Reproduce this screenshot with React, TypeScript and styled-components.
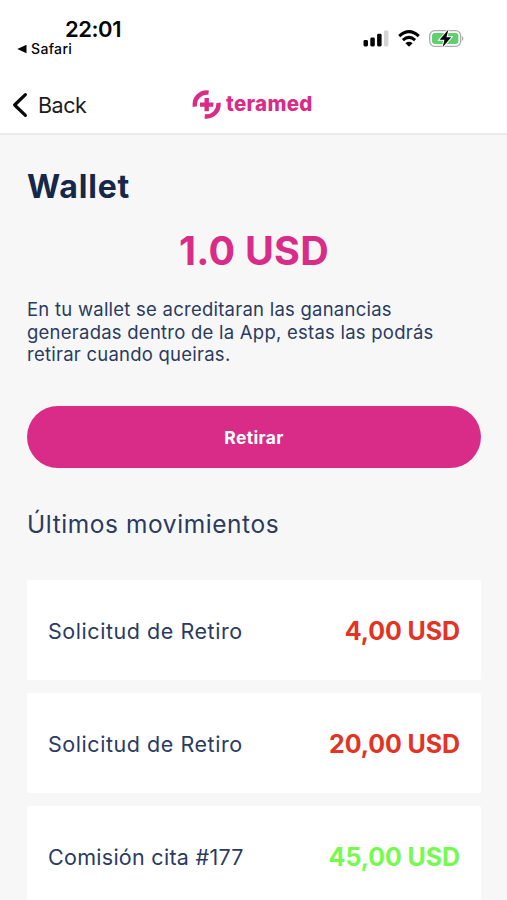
import React from 'react';
import styled, { createGlobalStyle } from 'styled-components';

const PINK = '#d92c88';
const NAVY = '#2b3b60';

const GlobalStyle = createGlobalStyle`
  *, *::before, *::after { box-sizing: border-box; }
  html, body { margin: 0; padding: 0; }
  body { background: #f7f7f7; overflow: hidden; }
`;

const Screen = styled.div`
  height: 900px;
  overflow: hidden;
  background: #f7f7f7;
  color: ${NAVY};
  font-family: Inter, 'Liberation Sans', sans-serif;
`;

const StatusBar = styled.div`
  height: 76px;
  padding: 17px 42px 0 17px;
  display: flex;
  justify-content: space-between;
  background: #fff;
  color: #050505;
`;

const Clock = styled.div`
  padding-left: 48px;
  font-size: 22px;
  line-height: 24px;
  font-weight: 600;
  letter-spacing: -0.45px;
`;

const ReturnLink = styled.div`
  display: flex;
  align-items: center;
  gap: 4px;
  font-size: 14px;
  line-height: 15px;
  letter-spacing: 0.35px;
  font-weight: 500;
`;

const Indicators = styled.div`
  padding-top: 11px;
  height: 34px;
  display: flex;
  align-items: flex-start;
`;

const Header = styled.header`
  height: 59px;
  padding: 0 12px;
  display: grid;
  grid-template-columns: 180px auto 1fr;
  align-items: start;
  border-bottom: 2px solid #ebebeb;
  background: #fff;
`;

const BackButton = styled.button`
  height: 58px;
  padding: 0;
  display: flex;
  align-items: center;
  gap: 10px;
  border: 0;
  background: none;
  color: #1c1c1e;
  font: 400 21.5px/24px Inter, sans-serif;
  letter-spacing: -0.5px;
`;

const Brand = styled.div`
  height: 56px;
  display: flex;
  align-items: center;
  gap: 5px;
  color: ${PINK};
`;

const BrandName = styled.span`
  font-size: 20.5px;
  line-height: 24px;
  font-weight: 800;
  letter-spacing: 0.3px;
`;

const Content = styled.main`
  padding: 33px 26px 0 27px;
`;

const Title = styled.h1`
  margin: 0;
  font-size: 32px;
  line-height: 38px;
  font-weight: 700;
  letter-spacing: 0.85px;
  color: #152849;
`;

const Balance = styled.div`
  margin-top: 21px;
  font-size: 39.5px;
  line-height: 48px;
  font-weight: 700;
  letter-spacing: 0.2px;
  text-align: center;
  color: ${PINK};
`;

const Description = styled.p`
  margin: 23px 0 0;
  font-size: 18.5px;
  line-height: 22.6px;
  letter-spacing: 0.24px;
  white-space: nowrap;
`;

const WithdrawButton = styled.button`
  margin-top: 40px;
  width: 100%;
  height: 62px;
  padding: 2px 0 0;
  border: 0;
  border-radius: 31px;
  background: ${PINK};
  color: #fff;
  font: 700 17.5px/22px Inter, sans-serif;
  letter-spacing: 0.35px;
`;

const SectionTitle = styled.h2`
  margin: 41px 0 0;
  font-size: 24.5px;
  line-height: 30px;
  font-weight: 400;
  letter-spacing: 0.57px;
`;

const Movements = styled.div`
  margin-top: 41px;
  display: grid;
  gap: 13.2px;
`;

const Movement = styled.div`
  height: 100px;
  padding: 2px 21px 0;
  display: flex;
  align-items: center;
  justify-content: space-between;
  border-radius: 2px;
  background: #fff;
`;

const MovementLabel = styled.span<{ $tracking: number }>`
  font-size: 21.5px;
  line-height: 28px;
  letter-spacing: ${({ $tracking }) => $tracking}px;
`;

const Amount = styled.span<{ $incoming?: boolean }>`
  font-size: 25px;
  line-height: 30px;
  font-weight: 700;
  letter-spacing: -0.1px;
  color: ${({ $incoming }) => ($incoming ? '#77fa50' : '#e33324')};
`;

const movements = [
  { label: 'Solicitud de Retiro', amount: '4,00 USD', tracking: 0.55 },
  { label: 'Solicitud de Retiro', amount: '20,00 USD', tracking: 0.55 },
  { label: 'Comisión cita #177', amount: '45,00 USD', tracking: 0.28, incoming: true },
];

const StatusIcons = () => (
  <svg width="102" height="22" viewBox="0 0 102 22">
    <g fill="#050505">
      <rect x="0.5" y="12" width="4.5" height="6.5" rx="1.4" />
      <rect x="7.3" y="9.5" width="4.5" height="9" rx="1.4" />
      <rect x="14.1" y="5.8" width="4.5" height="12.7" rx="1.4" />
      <rect x="20.9" y="2.5" width="4.5" height="16" rx="1.4" fill="#d4d4d4" />
    </g>
    <g fill="none" stroke="#050505" strokeWidth="3">
      <path d="M36.2 8.1Q46 -0.8 55.8 8.1" />
      <path d="M39.9 12.1Q46 6.7 52.1 12.1" />
    </g>
    <path d="M42.4 15.2Q46 12.4 49.6 15.2L46 18.8Z" fill="#050505" />
    <rect x="66.7" y="2.7" width="31" height="15.6" rx="5" fill="#fff" stroke="#adadad" strokeWidth="1.3" />
    <rect x="69" y="5" width="26.4" height="11" rx="3" fill="#60cf70" />
    <path d="M99.1 8q2.6 2.4 0 5Z" fill="#a5a5a5" />
    <path
      d="M85.5 1.6L76.6 11.8H81.5L79.6 19.3L88.2 9.2H83.4Z"
      fill="#050505"
      stroke="#fff"
      strokeWidth="2"
      paintOrder="stroke"
    />
  </svg>
);

const BrandMark = () => (
  <svg width="29" height="30" viewBox="0 0 29 30" fill="none" stroke="currentColor">
    <path d="M3 17.6A12 12 0 0 1 16.6 3.6" strokeWidth="4.4" />
    <path d="M26.4 13.9A12 12 0 0 1 12.8 27.3" strokeWidth="4.4" />
    <path d="M14.7 8.9V22.3M8 15.6H21.4" strokeWidth="4.4" />
  </svg>
);

export default function App() {
  return (
    <Screen>
      <GlobalStyle />
      <StatusBar>
        <div>
          <Clock>22:01</Clock>
          <ReturnLink>
            <svg width="10" height="10" viewBox="0 0 10 10">
              <path d="M0.3 5L9.5 0.7V9.3Z" fill="#050505" />
            </svg>
            Safari
          </ReturnLink>
        </div>
        <Indicators>
          <StatusIcons />
        </Indicators>
      </StatusBar>
      <Header>
        <BackButton>
          <svg width="16" height="26" viewBox="0 0 16 26">
            <path
              d="M13.4 2.7L2.6 13L13.4 23.3"
              fill="none"
              stroke="#080808"
              strokeWidth="3.2"
              strokeLinecap="round"
              strokeLinejoin="round"
            />
          </svg>
          Back
        </BackButton>
        <Brand>
          <BrandMark />
          <BrandName>teramed</BrandName>
        </Brand>
      </Header>
      <Content>
        <Title>Wallet</Title>
        <Balance>1.0 USD</Balance>
        <Description>
          En tu wallet se acreditaran las ganancias
          <br />
          generadas dentro de la App, estas las podrás
          <br />
          retirar cuando queiras.
        </Description>
        <WithdrawButton>Retirar</WithdrawButton>
        <SectionTitle>Últimos movimientos</SectionTitle>
        <Movements>
          {movements.map(({ label, amount, tracking, incoming }, index) => (
            <Movement key={index}>
              <MovementLabel $tracking={tracking}>{label}</MovementLabel>
              <Amount $incoming={incoming}>{amount}</Amount>
            </Movement>
          ))}
        </Movements>
      </Content>
    </Screen>
  );
}
